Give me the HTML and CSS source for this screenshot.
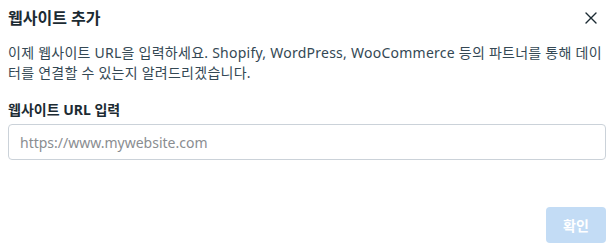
FILE: index.html
```html
<!DOCTYPE html>
<html lang="ko">

<head>
    <meta charset="UTF-8">
    <meta name="viewport" content="width=device-width, initial-scale=1.0">
    <title>웹사이트 추가</title>
    <link rel="stylesheet" href="styles.css">
</head>

<body>
    <div class="dialog">
        <div class="dialog-header">
            <div class="dialog-title">웹사이트 추가</div>
            <button class="close-btn" aria-label="닫기">
                <svg width="12" height="12" viewBox="0 0 12 12">
                    <path d="M1 1 L11 11 M11 1 L1 11" stroke="#1c2b33" stroke-width="1.4" stroke-linecap="round" />
                </svg>
            </button>
        </div>

        <p class="dialog-text">이제 웹사이트 URL을 입력하세요. Shopify, WordPress, WooCommerce 등의 파트너를 통해 데이터를 연결할 수 있는지 알려드리겠습니다.</p>

        <label class="field-label" for="site-url">웹사이트 URL 입력</label>
        <input class="field-input" id="site-url" type="text" placeholder="https://www.mywebsite.com">

        <div class="dialog-footer">
            <button class="confirm-btn" disabled>확인</button>
        </div>
    </div>
</body>

</html>
```

FILE: styles.css
```css
* {
    margin: 0;
    padding: 0;
    box-sizing: border-box;
}

body {
    background: #ffffff;
    font-family: 'Noto Sans', 'Noto Sans CJK KR', sans-serif;
    color: #1c2b33;
}

.dialog {
    width: 614px;
    height: 250px;
    padding: 8px 8px 7px 8px;
    display: flex;
    flex-direction: column;
}

.dialog-header {
    display: flex;
    justify-content: space-between;
    align-items: center;
    height: 20px;
}

.dialog-title {
    font-size: 16px;
    font-weight: bold;
    line-height: 20px;
}

.close-btn {
    background: none;
    border: none;
    width: 20px;
    height: 20px;
    display: flex;
    justify-content: center;
    align-items: center;
    margin-right: 5px;
    cursor: pointer;
}

.dialog-text {
    margin-top: 15px;
    font-size: 14px;
    line-height: 20px;
    color: #344854;
    letter-spacing: 0.25px;
    word-break: break-all;
}

.field-label {
    margin-top: 17px;
    font-size: 14px;
    font-weight: bold;
    line-height: 20px;
}

.field-input {
    margin-top: 4px;
    width: 598px;
    height: 36px;
    border: 1px solid #cbd2d9;
    border-radius: 4px;
    padding: 0 11px;
    font-family: inherit;
    font-size: 14px;
    color: #1c2b33;
    outline: none;
}

.field-input::placeholder {
    color: #8a8d91;
}

.dialog-footer {
    margin-top: auto;
    display: flex;
    justify-content: flex-end;
}

.confirm-btn {
    width: 60px;
    height: 36px;
    background: #c3dcf5;
    border: none;
    border-radius: 4px;
    color: #ffffff;
    font-family: inherit;
    font-size: 14px;
    font-weight: bold;
}
```
